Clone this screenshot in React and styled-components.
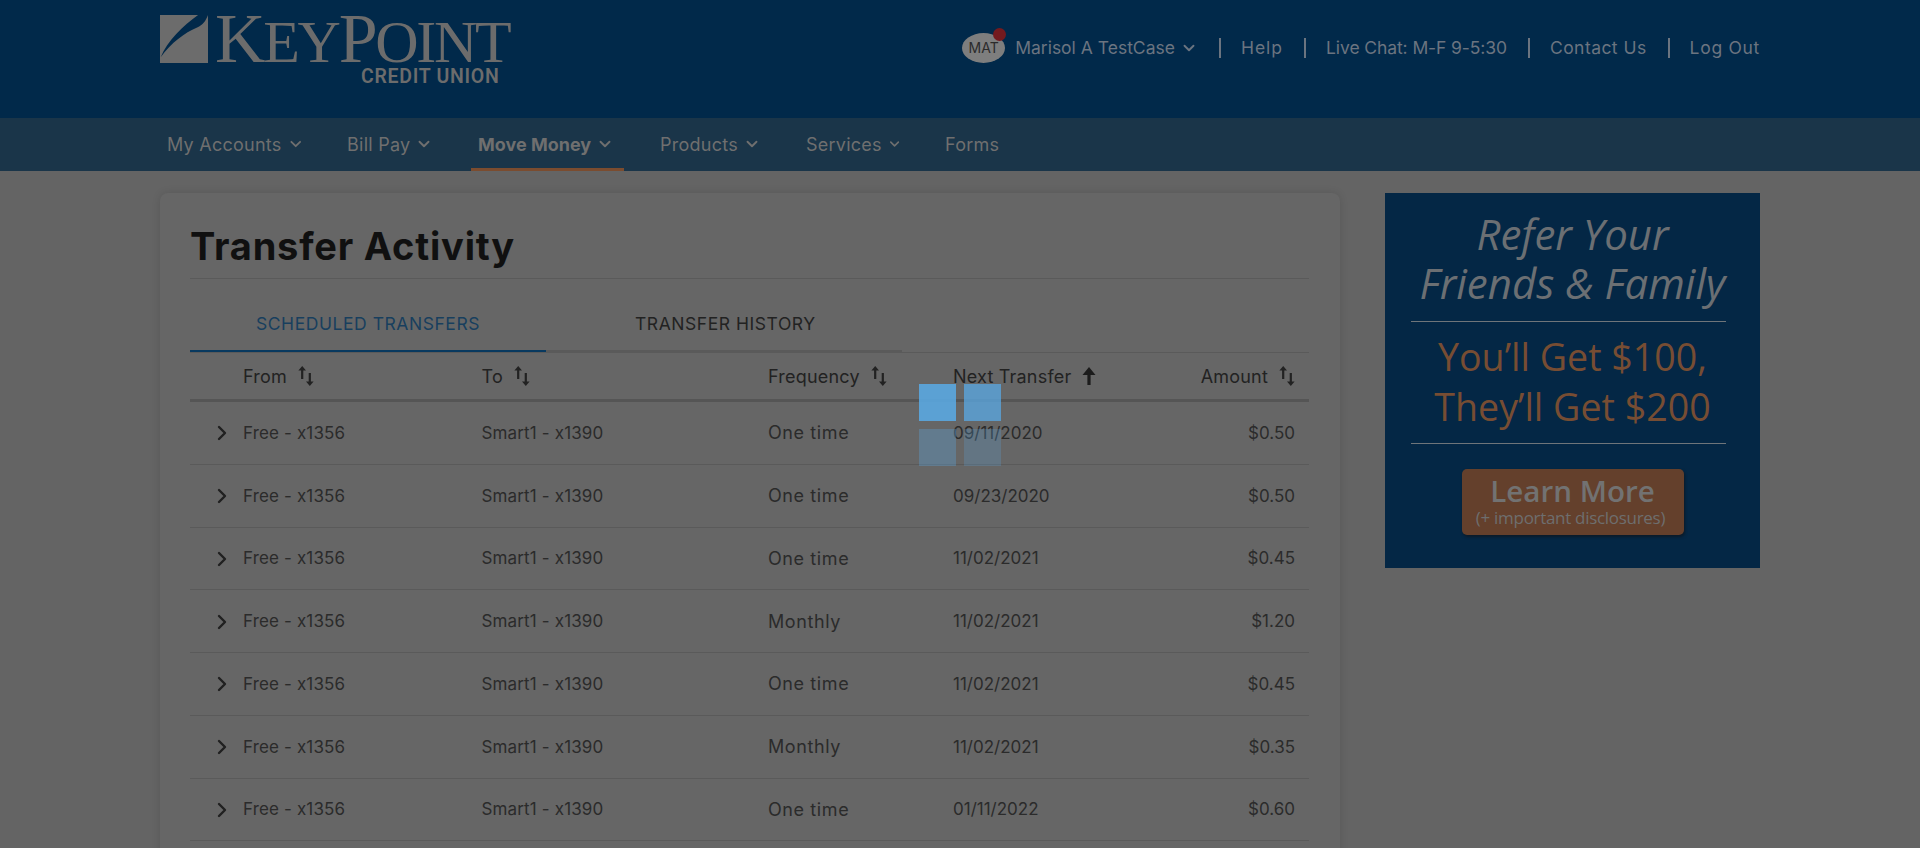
import React from 'react';
import styled, { createGlobalStyle } from 'styled-components';
import { ChevronDown, ChevronRight } from 'lucide-react';

const GlobalStyle = createGlobalStyle`
  html, body {
    margin: 0;
    height: 100%;
    overflow: hidden;
    background: #646464;
    font-family: Inter, "Liberation Sans", sans-serif;
  }
  * { box-sizing: border-box; }
`;

const Page = styled.div`
  position: relative;
  height: 848px;
  overflow: hidden;
`;

const TopBar = styled.header`
  height: 118px;
  background: #01294a;
`;

const Wrap = styled.div`
  width: 1600px;
  margin: 0 auto;
  display: flex;
`;

const TopWrap = styled(Wrap)`
  justify-content: space-between;
  padding-top: 15px;
`;

const Logo = styled.div`
  display: flex;
  gap: 7px;
  color: #6c6c6c;
`;

const LogoWords = styled.div`
  display: flex;
  flex-direction: column;
  align-items: flex-end;
`;

const WordMark = styled.div`
  font-family: "Liberation Serif", serif;
  font-size: 60px;
  line-height: 48px;
  height: 48px;
  white-space: nowrap;
  letter-spacing: -2.3px;
`;

const BigLetter = styled.span`
  font-size: 70px;
`;

const CreditUnion = styled.div`
  margin-top: 7px;
  margin-right: 10px;
  font-family: Roboto, sans-serif;
  font-weight: 600;
  font-size: 19.5px;
  line-height: 14px;
  letter-spacing: 0.7px;
`;

const UserLinks = styled.nav`
  display: flex;
  align-items: center;
  height: 65px;
  color: #6b7480;
  font-size: 17.5px;
  white-space: nowrap;
`;

const Avatar = styled.div`
  position: relative;
  width: 43px;
  height: 30px;
  margin-right: 10px;
  border-radius: 50%;
  background: #7e7e7e;
  color: #2b2b2b;
  font-size: 14px;
  line-height: 30px;
  text-align: center;
`;

const Badge = styled.span`
  position: absolute;
  top: -5px;
  right: -1px;
  width: 13px;
  height: 13px;
  border-radius: 50%;
  background: #741a1e;
`;

const UserName = styled.span`
  display: flex;
  align-items: center;
  gap: 5px;
  margin-right: 21px;
`;

const TopLink = styled.a`
  padding-left: 20px;
  margin-left: ${p => (p.$first ? 0 : 21)}px;
  border-left: 2px solid #6b7480;
  line-height: 20px;
  letter-spacing: ${p => p.$track || 0}px;
`;

const NavBar = styled.div`
  height: 53px;
  background: #1a3549;
`;

const NavWrap = styled(Wrap)`
  gap: 29px;
  height: 53px;
`;

const NavItem = styled.a`
  display: flex;
  align-items: center;
  gap: 5px;
  width: ${p => p.$width}px;
  height: 53px;
  padding: 2px 7px 0;
  color: #6f6f6f;
  font-size: 18px;
  font-weight: ${p => (p.$active ? 700 : 400)};
  letter-spacing: ${p => (p.$active ? 0 : 0.25)}px;
  white-space: nowrap;
  border-bottom: 3px solid ${p => (p.$active ? '#7b4c2f' : 'transparent')};
`;

const Columns = styled(Wrap)`
  gap: 45px;
  padding-top: 22px;
  align-items: flex-start;
`;

const Card = styled.main`
  width: 1180px;
  height: 700px;
  padding: 30px 31px 0 30px;
  background: #666666;
  border-radius: 8px;
  box-shadow: 0 0 8px rgba(0, 0, 0, 0.12);
`;

const Title = styled.h1`
  margin: 0;
  height: 56px;
  border-bottom: 1px solid #5a5a5a;
  color: #101010;
  font-size: 38px;
  font-weight: 700;
  line-height: 46px;
  letter-spacing: 0.8px;
`;

const Tabs = styled.div`
  display: flex;
  height: 73px;
  width: 712px;
  border-bottom: 2px solid #5a5a5a;
`;

const Tab = styled.div`
  width: ${p => p.$width}px;
  padding-top: 35px;
  margin-bottom: -2px;
  padding-left: ${p => p.$left}px;
  color: ${p => (p.$active ? '#183f5e' : '#222222')};
  font-size: 17.5px;
  line-height: 20px;
  letter-spacing: 0.55px;
  white-space: nowrap;
  border-bottom: 2px solid ${p => (p.$active ? '#08395f' : 'transparent')};
`;

const gridColumns = '53px 238.5px 286.5px 185px 1fr 130px';

const HeadRow = styled.div`
  display: grid;
  grid-template-columns: ${gridColumns};
  align-items: center;
  height: 50px;
  padding-right: 14px;
  border-top: 1px solid #5a5a5a;
  border-bottom: 3px solid #555555;
  color: #222222;
  font-size: 18px;
  letter-spacing: 0.2px;
`;

const HeadCell = styled.div`
  display: flex;
  align-items: center;
  gap: 11px;
  grid-column: ${p => p.$col};
  justify-content: ${p => (p.$right ? 'flex-end' : 'flex-start')};
`;

const Row = styled.div`
  display: grid;
  grid-template-columns: ${gridColumns};
  align-items: center;
  height: 62.75px;
  padding-right: 14px;
  border-bottom: 1px solid #5a5a5a;
  color: #2b2b2b;
  font-size: 17px;
`;

const Toggle = styled.div`
  display: flex;
  padding-left: 20px;
  padding-top: 1px;
  color: #202020;
`;

const AccountCell = styled.div`
  letter-spacing: 0.15px;
`;

const FrequencyCell = styled.div`
  font-size: 18px;
  letter-spacing: 0.6px;
`;

const Amount = styled.div`
  text-align: right;
`;

const Banner = styled.aside`
  width: 375px;
  height: 375px;
  padding-top: 16px;
  background: #042745;
  display: flex;
  flex-direction: column;
  align-items: center;
  font-family: "Open Sans", sans-serif;
`;

const BannerLead = styled.div`
  height: 112px;
  color: #6b6f73;
  font-size: 42px;
  font-style: italic;
  line-height: 49px;
  text-align: center;
  white-space: nowrap;
`;

const BannerRule = styled.div`
  width: 315px;
  height: 1px;
  flex: none;
  margin-right: 8px;
  background: #6f757a;
`;

const BannerOffer = styled.div`
  height: 121px;
  padding-top: 10px;
  color: #774d33;
  font-size: 37.6px;
  line-height: 49.5px;
  text-align: center;
  white-space: nowrap;
`;

const LearnMore = styled.div`
  width: 222px;
  height: 66px;
  margin-top: 25px;
  border-radius: 5px;
  background: #64402c;
  box-shadow: 1px 2px 3px #0b1a28;
  color: #727272;
  text-align: center;
`;

const LearnTitle = styled.div`
  padding-top: 4px;
  font-size: 29.6px;
  font-weight: 600;
  line-height: 36px;
`;

const LearnNote = styled.div`
  margin-top: -1px;
  padding-right: 4px;
  color: #6e6e6e;
  font-size: 17px;
  line-height: 20px;
  letter-spacing: -0.3px;
`;

const Loader = styled.div`
  position: absolute;
  top: 384px;
  left: 919px;
  display: grid;
  grid-template-columns: 36.5px 36.5px;
  grid-template-rows: 36.5px 36.5px;
  gap: 8.5px;
`;

const LoaderSquare = styled.div`
  background: #5aa7e0;
  opacity: ${p => p.$alpha};
`;

function LogoMark() {
  return (
    <svg width="48" height="48" viewBox="0 0 145 145">
      <rect width="145" height="145" fill="#6c6c6c" />
      <path d="M2 128C22 78 70 32 115 0H145C138 18 130 30 112 38C74 54 34 84 2 128Z" fill="#01294a" />
    </svg>
  );
}

function SortIcon() {
  return (
    <svg width="16" height="20" viewBox="0 0 16 20" fill="#222222">
      <path d="M4.2 0L8 4.4H5.3V13H3.1V4.4H.4Z" />
      <path d="M11.8 20L8 15.6H10.7V7H12.9V15.6H15.6Z" />
    </svg>
  );
}

function SortUpIcon() {
  return (
    <svg width="14" height="18" viewBox="0 0 14 18" fill="#1c1c1c">
      <path d="M7 0L13.5 8H8.6V18H5.4V8H.5Z" />
    </svg>
  );
}

const navItems = [
  { label: 'My Accounts', width: 151, menu: true },
  { label: 'Bill Pay', width: 102, menu: true },
  { label: 'Move Money', width: 153, menu: true, active: true },
  { label: 'Products', width: 117, menu: true },
  { label: 'Services', width: 110, menu: true },
  { label: 'Forms', width: 70 },
];

const transfers = [
  ['One time', '09/11/2020', '$0.50'],
  ['One time', '09/23/2020', '$0.50'],
  ['One time', '11/02/2021', '$0.45'],
  ['Monthly', '11/02/2021', '$1.20'],
  ['One time', '11/02/2021', '$0.45'],
  ['Monthly', '11/02/2021', '$0.35'],
  ['One time', '01/11/2022', '$0.60'],
];

export default function App() {
  return (
    <Page>
      <GlobalStyle />
      <TopBar>
        <TopWrap>
          <Logo>
            <LogoMark />
            <LogoWords>
              <WordMark><BigLetter>K</BigLetter>EY<BigLetter>P</BigLetter>OINT</WordMark>
              <CreditUnion>CREDIT UNION</CreditUnion>
            </LogoWords>
          </Logo>
          <UserLinks>
            <Avatar>MAT<Badge /></Avatar>
            <UserName>Marisol A TestCase <ChevronDown size={18} strokeWidth={2.5} /></UserName>
            <TopLink $first $track={1}>Help</TopLink>
            <TopLink $track={-0.1}>Live Chat: M-F 9-5:30</TopLink>
            <TopLink $track={0.45}>Contact Us</TopLink>
            <TopLink $track={0.7}>Log Out</TopLink>
          </UserLinks>
        </TopWrap>
      </TopBar>
      <NavBar>
        <NavWrap>
          {navItems.map(item => (
            <NavItem key={item.label} $width={item.width} $active={item.active}>
              {item.label}
              {item.menu && <ChevronDown size={18} strokeWidth={2.5} />}
            </NavItem>
          ))}
        </NavWrap>
      </NavBar>
      <Columns>
        <Card>
          <Title>Transfer Activity</Title>
          <Tabs>
            <Tab $active $width={356} $left={66}>SCHEDULED TRANSFERS</Tab>
            <Tab $width={336} $left={89}>TRANSFER HISTORY</Tab>
          </Tabs>
          <HeadRow>
            <HeadCell $col={2}>From <SortIcon /></HeadCell>
            <HeadCell $col={3}>To <SortIcon /></HeadCell>
            <HeadCell $col={4}>Frequency <SortIcon /></HeadCell>
            <HeadCell $col={5}>Next Transfer <SortUpIcon /></HeadCell>
            <HeadCell $col={6} $right>Amount <SortIcon /></HeadCell>
          </HeadRow>
          {transfers.map((t, i) => (
            <Row key={i}>
              <Toggle><ChevronRight size={24} strokeWidth={2.4} /></Toggle>
              <AccountCell>Free - x1356</AccountCell>
              <AccountCell>Smart1 - x1390</AccountCell>
              <FrequencyCell>{t[0]}</FrequencyCell>
              <div>{t[1]}</div>
              <Amount>{t[2]}</Amount>
            </Row>
          ))}
        </Card>
        <Banner>
          <BannerLead>Refer Your<br />Friends &amp; Family</BannerLead>
          <BannerRule />
          <BannerOffer>You’ll Get $100,<br />They’ll Get $200</BannerOffer>
          <BannerRule />
          <LearnMore>
            <LearnTitle>Learn More</LearnTitle>
            <LearnNote>(+ important disclosures)</LearnNote>
          </LearnMore>
        </Banner>
      </Columns>
      <Loader>
        <LoaderSquare $alpha={0.9} />
        <LoaderSquare $alpha={0.78} />
        <LoaderSquare $alpha={0.33} />
        <LoaderSquare $alpha={0.24} />
      </Loader>
    </Page>
  );
}
